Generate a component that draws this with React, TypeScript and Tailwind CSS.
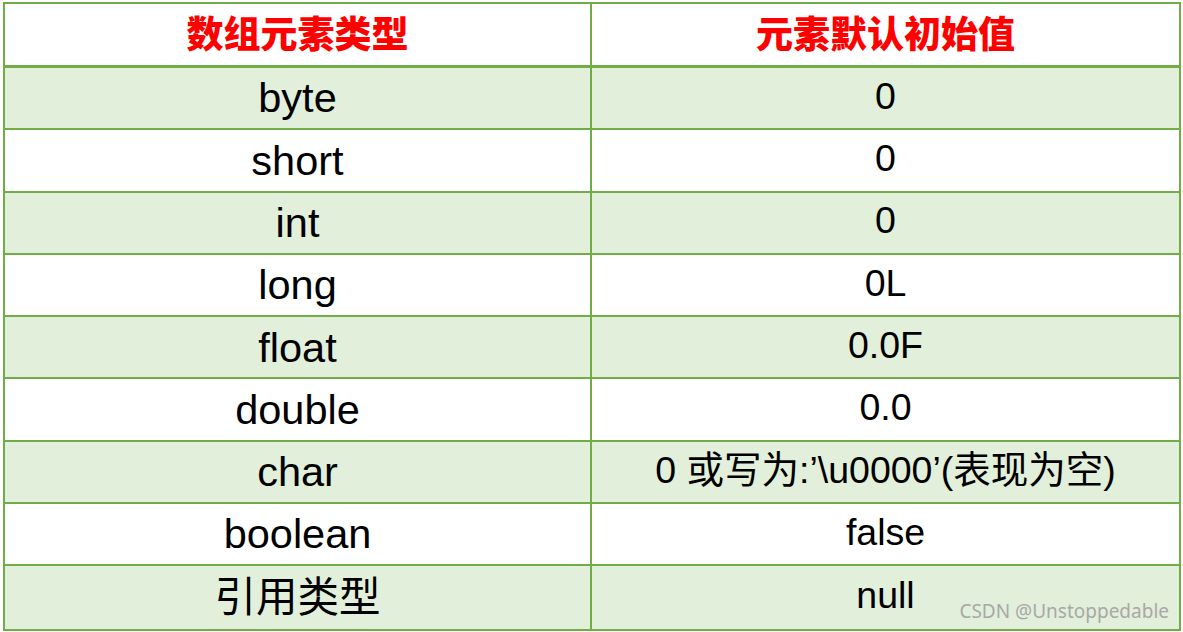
import React from 'react';

interface Row {
  type: string;
  value: string;
}

const rows: Row[] = [
  { type: 'byte', value: '0' },
  { type: 'short', value: '0' },
  { type: 'int', value: '0' },
  { type: 'long', value: '0L' },
  { type: 'float', value: '0.0F' },
  { type: 'double', value: '0.0' },
  { type: 'char', value: '0 或写为:’\\u0000’(表现为空)' },
  { type: 'boolean', value: 'false' },
  { type: '引用类型', value: 'null' },
];

const font = { fontFamily: '"Liberation Sans", Arial, "Noto Sans CJK SC", sans-serif' };

export default function App() {
  return (
    <div className="relative w-[1183px] h-[632px] bg-white overflow-hidden" style={font}>
      <div className="ml-[3px] mt-[2px] w-[1178px] border-2 border-[#70ad47]">
        {/* Header */}
        <div className="grid grid-cols-2 h-[64px] border-b-[3px] border-[#70ad47] bg-white">
          <div
            className="flex items-center justify-center border-r-2 border-[#70ad47] text-[#ff0000] text-[37px] font-bold pb-[4px]"
            style={{ fontFamily: '"Noto Sans CJK SC", sans-serif', fontWeight: 900 }}
          >
            数组元素类型
          </div>
          <div
            className="flex items-center justify-center text-[#ff0000] text-[37px] font-bold pb-[4px]"
            style={{ fontFamily: '"Noto Sans CJK SC", sans-serif', fontWeight: 900 }}
          >
            元素默认初始值
          </div>
        </div>

        {/* Body rows */}
        {rows.map((row, i) => (
          <div
            key={row.type}
            className={
              'grid grid-cols-2 h-[62.3px] border-[#70ad47] ' +
              (i < rows.length - 1 ? 'border-b-2 ' : '') +
              (i % 2 === 0 ? 'bg-[#e2efda]' : 'bg-white')
            }
          >
            <div className="flex items-center justify-center border-r-2 border-[#70ad47] text-black text-[41.5px] leading-none">
              {row.type}
            </div>
            <div className="flex items-center justify-center text-black text-[37.5px] leading-none pb-[3px]">
              {row.value}
            </div>
          </div>
        ))}
      </div>

      {/* Watermark */}
      <div
        className="absolute right-[14px] bottom-[11px] text-[19px] text-[#a8a8a8] leading-none"
        style={{ fontFamily: '"Noto Sans", "DejaVu Sans", sans-serif' }}
      >
        CSDN @Unstoppedable
      </div>
    </div>
  );
}
